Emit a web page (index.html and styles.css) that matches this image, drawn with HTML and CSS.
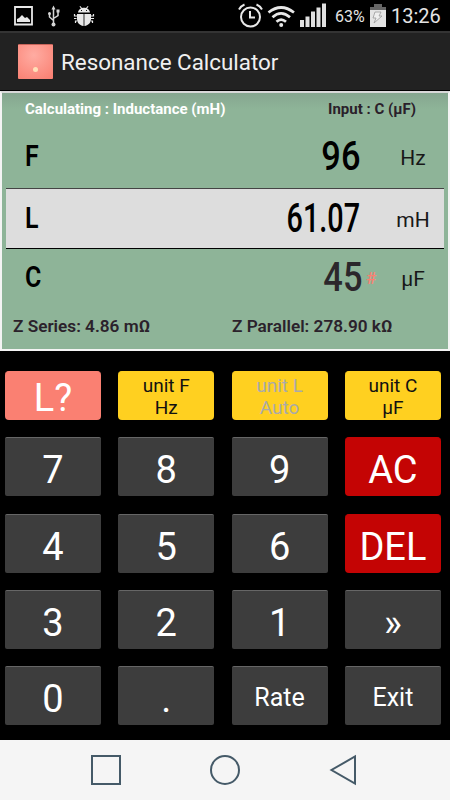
FILE: index.html
```
<!DOCTYPE html>
<html lang="en">
<head>
<meta charset="utf-8">
<title>Resonance Calculator</title>
<link rel="stylesheet" href="styles.css">
</head>
<body>
<header class="status">
  <svg class="status-left" viewBox="0 0 100 30" width="100" height="30">
    <path d="M15 7h17v17.500H15z" fill="none" stroke="#e8e8e8" stroke-width="1.800"/>
    <path d="M17 22v-3l2-1 3-3 3 3 2-1 3 3v2z" fill="#e8e8e8"/>
    <g fill="none" stroke="#d6d6d6" stroke-width="1.500">
      <path d="M53.500 9v15M49.500 14v3l4 3.500M58 11v4.500l-4.500 3"/>
    </g>
    <g fill="#d6d6d6"><path d="M53.500 5.500l2 4h-4z"/><circle cx="49.500" cy="13.500" r="1.500"/><path d="M56.500 9.500h3v3h-3z"/><circle cx="53.500" cy="24.500" r="2"/></g>
    <g fill="#e8e8e8">
      <path d="M78 12.500c.3-2 1.500-3.500 3-4L79.500 6.500l.8-.6L82 8c1.200-.4 2.800-.4 4 0l1.700-2.100.8.600L87 8.500c1.500.5 2.700 2 3 4z"/>
      <path d="M77 14h6.600v12C79 25.500 77 22 77 19zM84.400 14H91v5c0 3-2 6.500-6.600 7z"/>
    </g>
    <path d="M77 16h-2.500v-2M76.500 18.500h-2.500M77 21h-1.500v2M91 16h2.500v-2M91 18.500h3M91 21h1.500v2" fill="none" stroke="#e8e8e8" stroke-width="1.200"/>
    <path d="M81 10.500h1M86 10.500h1" stroke="#111"/>
  </svg>
  <div class="status-right">
    <svg viewBox="0 0 92 30" width="92" height="30">
      <g fill="none" stroke="#e8e8e8" stroke-width="2">
        <circle cx="15.500" cy="17" r="9.500"/><path d="M15 11v6.500h5"/><path d="M4 9.500Q6 6 9.500 4.500M21.500 4.500Q25 6 27 9.500"/>
      </g>
      <g fill="none" stroke="#e8e8e8" stroke-width="2.700">
        <path d="M33.500 12.500Q46 2.500 59 12.500M37.500 17.300Q46 9.500 55 17.300M41.500 21.800Q46 17.500 51 21.800"/>
      </g>
      <circle cx="46.200" cy="25" r="2" fill="#e8e8e8"/>
      <path d="M65 20h4v7h-4zM70.500 16.500h4V27h-4zM76 11.500h4V27h-4zM81.500 7.500h4V27h-4zM87 3.500h4V27h-4z" fill="#e0e0e0"/>
    </svg>
    <span class="percent">63%</span>
    <svg class="battery" viewBox="0 0 18 30" width="18" height="30">
      <path d="M5 4h8v3h4v4H1V7h4z" fill="#666"/><path d="M1 10h16v17H1z" fill="#e4e4e4"/>
      <path d="M6 12h6l-2 4h3L5 23l2-5H4z" fill="#eee" stroke="#999" stroke-width=".8"/>
    </svg>
    <span class="clock">13:26</span>
  </div>
</header>
<div class="titlebar">
  <div class="app-icon"><i></i></div>
  <h1>Resonance Calculator</h1>
</div>
<main class="display">
  <div class="mode"><span class="calculating">Calculating : Inductance (mH)</span><span class="input-mode">Input : C (µF)</span></div>
  <div class="row row-f"><b class="letter">F</b><span class="value"><span class="lcd two">96</span></span><span class="unit">Hz</span></div>
  <div class="row row-l"><b class="letter">L</b><span class="value"><span class="lcd four">61.07</span></span><span class="unit">mH</span></div>
  <div class="row row-c"><b class="letter">C</b><span class="value"><span class="lcd two grey">45</span><span class="cursor">#</span></span><span class="unit">µF</span></div>
  <div class="impedance"><span>Z Series: 4.86 mΩ</span><span>Z Parallel: 278.90 kΩ</span></div>
</main>
<section class="keys">
  <button class="key coral">L?</button>
  <button class="key yellow">unit F<br>Hz</button>
  <button class="key yellow off">unit L<br>Auto</button>
  <button class="key yellow">unit C<br>µF</button>
  <button class="key">7</button><button class="key">8</button><button class="key">9</button><button class="key red">AC</button>
  <button class="key">4</button><button class="key">5</button><button class="key">6</button><button class="key red">DEL</button>
  <button class="key">3</button><button class="key">2</button><button class="key">1</button><button class="key">»</button>
  <button class="key">0</button><button class="key">.</button><button class="key small">Rate</button><button class="key small">Exit</button>
</section>
<nav class="navbar">
  <svg viewBox="0 0 32 32" width="32" height="32"><path d="M2 2h28v28H2z"/></svg>
  <svg viewBox="0 0 32 32" width="32" height="32"><circle cx="16" cy="16" r="14"/></svg>
  <svg viewBox="0 0 32 32" width="32" height="32"><path d="M27 2.500v27L3.500 16z"/></svg>
</nav>
</body>
</html>
```
FILE: styles.css
```
* { box-sizing: border-box; }
body {
  margin: 0;
  width: 450px;
  height: 800px;
  overflow: hidden;
  background: #000;
  font-family: Roboto, "Liberation Sans", sans-serif;
  display: flex;
  flex-direction: column;
}
.status {
  height: 31px;
  display: flex;
  justify-content: space-between;
  color: #e4e4e4;
}
.status svg { display: block; flex: none; }
.status-right { display: flex; padding-right: 9px; }
.percent { font-size: 16px; line-height: 33px; width: 30px; margin-left: 8px; }
.percent, .clock { white-space: nowrap; }
.battery { margin-left: 4px; }
.clock { font-size: 20px; line-height: 33px; width: 50px; margin-left: 4px; }
.titlebar {
  height: 60px;
  background: #222;
  border-top: 2px solid #343434;
  border-bottom: 1px solid #000;
  display: flex;
  align-items: center;
  padding-left: 18px;
}
.app-icon {
  width: 35px;
  height: 35px;
  border-radius: 1px;
  background: radial-gradient(circle at 45% 30%, #ffaca2, #fa8072 95%);
  border-top: 1px solid #c8655b;
  display: flex;
  justify-content: center;
  align-items: flex-end;
  padding-bottom: 7px;
}
.app-icon i { width: 5px; height: 5px; border-radius: 50%; background: #ffe0b8; }
h1 { margin: 0 0 0 8px; font-size: 22.4px; font-weight: 400; color: #f0f0f0; white-space: nowrap; }
.display {
  height: 260px;
  border: 2px solid #f4f4f4;
  border-top-color: #d8d8d8;
  background: linear-gradient(#85a68f, #8eb498 16px);
  padding: 0 4px;
  color: #000;
}
.mode {
  height: 32px;
  display: flex;
  justify-content: space-between;
  padding: 0 28px 0 19px;
  font-size: 15px;
  font-weight: 700;
  line-height: 32px;
}
.calculating { color: #fff; }
.input-mode { color: #2a202a; }
.row { height: 61px; display: flex; align-items: center; padding-left: 19px; }
.row-f { height: 63px; }
.row-c { height: 57px; }
.row-l { background: #ddd; border-top: 1px solid #444; border-bottom: 1px solid #000; }
.letter { width: 60px; font-size: 29px; font-weight: 600; line-height: 1; }
.letter { transform: scaleX(.86); transform-origin: left; }
.value { width: 275px; display: flex; justify-content: flex-end; align-items: center; position: relative; }
.lcd { font-size: 40px; line-height: 1; font-weight: 500; transform: scaleX(.86); transform-origin: right; }
.four { transform: scaleX(.72); }
.grey { color: #2b272b; position: relative; left: 2px; }
.cursor { position: absolute; left: 100%; margin-left: 6px; color: #fa8072; font-size: 17px; font-weight: 500; }
.unit { flex: 1; text-align: center; font-size: 21px; color: #181818; padding: 2px 0 0 22px; }
.impedance {
  height: 40px;
  display: flex;
  font-size: 17.2px;
  font-weight: 600;
  line-height: 40px;
  color: #2b222b;
  padding-left: 7px;
}
.impedance span:first-child { width: 219px; }
.keys {
  flex: 1;
  display: grid;
  grid-template-columns: repeat(4, 96px);
  grid-template-rows: 49px repeat(4, 59px);
  column-gap: 17.3px;
  row-gap: 17.3px;
  padding: 20px 0 0 5px;
}
.key {
  border: 0;
  border-top: 1px solid #666;
  border-radius: 2px;
  padding: 6px 0 0;
  background: #3d3d3d;
  color: #fff;
  font: 400 38px/1 Roboto, "Liberation Sans", sans-serif;
}
.coral, .red, .yellow { border-radius: 4px; }
.coral { background: #fa8072; border-color: #fa8072; padding-top: 4px; }
.red { background: #c40404; border-color: #c40404; }
.yellow { background: #ffd020; border-color: #ffd020; color: #111; font-size: 19px; line-height: 22.5px; padding-top: 2px; }
.off { color: #aaa; }
.small { font-size: 25px; padding-top: 3px; }
.navbar {
  height: 60px;
  background: #f5f5f5;
  display: flex;
  justify-content: space-between;
  align-items: center;
  padding: 0 90px;
}
.navbar svg { fill: none; stroke: #455a68; stroke-width: 2; }
```
